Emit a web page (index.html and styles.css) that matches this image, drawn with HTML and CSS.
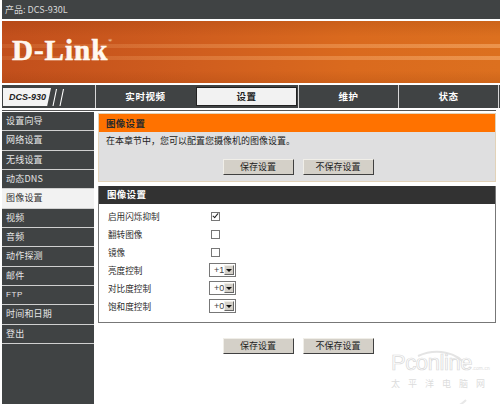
FILE: index.html
```html
<!DOCTYPE html>
<html lang="zh-CN">
<head>
  <meta charset="UTF-8" />
  <title>DCS-930L</title>
  <link rel="stylesheet" href="styles.css">
</head>
<body>
  <div class="product-bar">产品: DCS-930L</div>

  <div class="banner">
    <div class="streak streak-one"></div>
    <div class="streak streak-two"></div>
    <div class="logo">D-Link<sup>®</sup></div>
  </div>

  <nav class="top-nav">
    <div class="brand">
      <span class="brand-name">DCS-930</span>
      <svg class="brand-slashes" width="13" height="19" viewBox="0 0 13 19">
        <path d="M4.5 1 L1 18 M11.5 1 L8 18" stroke="#ffffff" stroke-width="1.1" fill="none" />
      </svg>
    </div>
    <a class="tab">实时视频</a>
    <a class="tab active">设置</a>
    <a class="tab">维护</a>
    <a class="tab">状态</a>
  </nav>
  <div class="nav-rule"></div>

  <div class="main">
    <aside class="sidebar">
      <a class="side-item">设置向导</a>
      <a class="side-item">网络设置</a>
      <a class="side-item">无线设置</a>
      <a class="side-item">动态DNS</a>
      <a class="side-item active">图像设置</a>
      <a class="side-item">视频</a>
      <a class="side-item">音频</a>
      <a class="side-item">动作探测</a>
      <a class="side-item">邮件</a>
      <a class="side-item latin">FTP</a>
      <a class="side-item">时间和日期</a>
      <a class="side-item">登出</a>
      <div class="side-fill"></div>
    </aside>

    <section class="content">
      <div class="intro-box">
        <h2 class="intro-title">图像设置</h2>
        <div class="intro-body">
          <p>在本章节中，您可以配置您摄像机的图像设置。</p>
          <div class="btn-row">
            <button class="btn">保存设置</button>
            <button class="btn">不保存设置</button>
          </div>
        </div>
      </div>

      <div class="settings-box">
        <h3 class="settings-title">图像设置</h3>
        <div class="settings-body">
          <div class="row"><span class="row-label">启用闪烁抑制</span><input class="check" type="checkbox" checked></div>
          <div class="row"><span class="row-label">翻转图像</span><input class="check" type="checkbox"></div>
          <div class="row"><span class="row-label">镜像</span><input class="check" type="checkbox"></div>
          <div class="row"><span class="row-label">亮度控制</span><span class="select"><span class="select-value">+1</span><span class="select-arrow"></span></span></div>
          <div class="row"><span class="row-label">对比度控制</span><span class="select"><span class="select-value">+0</span><span class="select-arrow"></span></span></div>
          <div class="row"><span class="row-label">饱和度控制</span><span class="select"><span class="select-value">+0</span><span class="select-arrow"></span></span></div>
        </div>
      </div>

      <div class="btn-row bottom">
        <button class="btn">保存设置</button>
        <button class="btn">不保存设置</button>
      </div>
    </section>
  </div>

  <div class="watermark">
    <svg class="wm-arcs" width="70" height="64" viewBox="0 0 70 64">
      <path d="M12 6 C30 -2 52 2 60 16" stroke="#e4e4e4" stroke-width="2" fill="none" />
      <path d="M8 56 C24 66 48 62 60 50" stroke="#e8e8e8" stroke-width="2" fill="none" />
    </svg>
    <div class="wm-name">Pconline<small>.com.cn</small></div>
    <div class="wm-sub">太平洋电脑网</div>
  </div>
</body>
</html>
```

FILE: styles.css
```css
:root {
  --dark: #404344;
  --orange: #ff7200;
  --rule: #d0d0d0;
  --cjk: "Noto Sans CJK SC", "Liberation Sans", sans-serif;
}

*, *::before, *::after {
  box-sizing: border-box;
}

html, body {
  height: 100%;
}

body {
  margin: 0;
  width: 500px;
  height: 404px;
  overflow: hidden;
  position: relative;
  background: #ffffff;
  color: #222222;
  font-family: var(--cjk);
  font-size: 9px;
}

.product-bar {
  height: 19px;
  margin-left: 2px;
  padding-left: 3px;
  background: var(--dark);
  color: #d8d8d8;
  font-size: 9px;
  line-height: 19px;
}

.banner {
  position: relative;
  height: 62px;
  margin: 2px 0 2px 2px;
  background:
    linear-gradient(to bottom, rgba(120, 40, 0, 0.16), rgba(120, 40, 0, 0) 25%, rgba(120, 40, 0, 0) 80%, rgba(120, 40, 0, 0.14)),
    linear-gradient(to right, #c24f1c 0%, #d05e1e 40%, #da6a1e 70%, #dc701f 100%);
  overflow: hidden;
}

.streak {
  position: absolute;
  left: 0;
  right: 0;
  height: 4px;
  background: linear-gradient(to right, rgba(255, 190, 130, 0.12), rgba(255, 190, 130, 0.45));
}

.streak-one { top: 23px; }
.streak-two { top: 35px; }

.logo {
  position: absolute;
  left: 10px;
  top: 11px;
  color: #fff8f0;
  font-family: "Liberation Serif", serif;
  font-weight: 700;
  font-size: 29px;
  line-height: 36px;
  letter-spacing: 1px;
  -webkit-text-stroke: 0.6px #fff8f0;
}

.logo sup {
  font-size: 5px;
  vertical-align: 18px;
  line-height: 0;
  -webkit-text-stroke: 0;
}

.top-nav {
  display: flex;
  height: 23px;
  margin-left: 2px;
  background: var(--dark);
}

.brand {
  display: flex;
  align-items: center;
  width: 93px;
  padding: 3px 0 2px 1px;
}

.brand-name {
  width: 48px;
  height: 18px;
  padding-left: 6px;
  background: #f4f4f4;
  color: #222222;
  font-family: "Liberation Sans", sans-serif;
  font-style: italic;
  font-weight: 700;
  font-size: 9px;
  line-height: 18px;
  clip-path: polygon(0 0, 100% 0, 92% 100%, 0 100%);
}

.brand-slashes {
  margin-left: 1px;
}

.tab {
  flex: 1;
  border-left: 1px solid #d8d8d8;
  color: #ffffff;
  font-weight: 700;
  font-size: 9.5px;
  letter-spacing: 0.6px;
  line-height: 23px;
  text-align: center;
}

.tab:last-child {
  border-right: 1px solid #d8d8d8;
  margin-right: 1px;
}

.tab.active {
  margin: 2px 1px;
  border: 1px solid #222222;
  background: #f2f2f2;
  color: #222222;
  line-height: 17px;
}

.nav-rule {
  height: 1px;
  margin: 2px 4px 0 2px;
  background: #555555;
}

.main {
  display: flex;
  margin-top: 1px;
  margin-left: 2px;
  height: 292px;
}

.sidebar {
  display: flex;
  flex-direction: column;
  width: 92px;
  flex-shrink: 0;
}

.side-item {
  height: 19.33px;
  padding-left: 4px;
  border-bottom: 1px solid var(--rule);
  background: var(--dark);
  color: #e6e6e6;
  font-size: 9px;
  letter-spacing: 0.2px;
  line-height: 18px;
}

.side-item.active {
  background: #f2f2f2;
  color: #333333;
}

.side-item.latin {
  font-family: "Liberation Sans", sans-serif;
  font-size: 8px;
  letter-spacing: 0.6px;
}

.side-fill {
  flex: 1;
  background: var(--dark);
}

.content {
  flex: 1;
  min-width: 0;
  padding: 1px 4px 0 4px;
}

.intro-box {
  border: 1px solid #e2d2b8;
  background: #dfdfe0;
}

.intro-title {
  margin: 0;
  height: 18px;
  padding-left: 7px;
  background: var(--orange);
  color: #2a2a2a;
  font-size: 9.5px;
  letter-spacing: 0.3px;
  line-height: 18px;
}

.intro-body {
  height: 49px;
  padding: 0 0 0 7px;
}

.intro-body p {
  margin: 0;
  font-size: 9px;
  line-height: 17px;
  color: #222222;
}

.btn-row {
  display: flex;
  justify-content: center;
  gap: 9px;
  padding-left: 2px;
}

.intro-body .btn-row {
  margin: 10px 0 0 -7px;
}

.btn-row.bottom {
  margin-top: 15px;
}

.btn {
  width: 71px;
  height: 16px;
  padding: 0;
  border: 1px solid;
  border-color: #f0eee8 #404040 #404040 #f0eee8;
  background: #d4d0c8;
  color: #222222;
  font-family: var(--cjk);
  font-size: 9px;
  line-height: 14px;
}

.settings-box {
  margin-top: 4px;
  border: 1px solid #777777;
  border-top: 0;
}

.settings-title {
  margin: 0;
  height: 18px;
  padding-left: 8px;
  background: #323232;
  color: #ffffff;
  font-size: 9.5px;
  letter-spacing: 0.3px;
  line-height: 17px;
}

.settings-body {
  height: 118px;
  padding: 3px 0 0 9px;
}

.row {
  display: flex;
  align-items: center;
  height: 18px;
}

.row-label {
  width: 101px;
  color: #2c2c2c;
  font-size: 8.6px;
}

.check {
  appearance: none;
  width: 9px;
  height: 9px;
  margin: 0 0 0 2px;
  border: 1px solid #777777;
  background: #ffffff;
  position: relative;
}

.check:checked::after {
  content: "";
  position: absolute;
  left: 2px;
  top: -1px;
  width: 3px;
  height: 6px;
  border: solid #222222;
  border-width: 0 1.5px 1.5px 0;
  transform: rotate(40deg);
}

.select {
  display: flex;
  align-items: center;
  width: 27px;
  height: 14px;
  padding: 1px;
  border: 1px solid #777777;
  background: #ffffff;
}

.select-value {
  flex: 1;
  padding-left: 3px;
  font-family: "Liberation Sans", sans-serif;
  font-size: 9px;
  color: #444444;
}

.select-arrow {
  position: relative;
  width: 10px;
  height: 10px;
  background: #d4d0c8;
  border: 1px solid;
  border-color: #f0eee8 #666666 #666666 #f0eee8;
}

.select-arrow::after {
  content: "";
  position: absolute;
  left: 1px;
  top: 3px;
  border: 3px solid transparent;
  border-top-color: #111111;
  border-bottom: 0;
}

.watermark {
  position: absolute;
  left: 391px;
  top: 353px;
  width: 105px;
  color: #ffffff;
  text-align: left;
}

.wm-arcs {
  position: absolute;
  left: 15px;
  top: -3px;
}

.wm-name {
  position: relative;
  font-family: "Liberation Sans", sans-serif;
  font-size: 22px;
  line-height: 20px;
  letter-spacing: -0.4px;
  white-space: nowrap;
  -webkit-text-stroke: 0.7px #d8d8d8;
}

.wm-name small {
  font-size: 5px;
  letter-spacing: 0;
  -webkit-text-stroke: 0.2px #d8d8d8;
}

.wm-sub {
  position: relative;
  color: #dcdcdc;
  font-size: 9px;
  letter-spacing: 8px;
  line-height: 12px;
  white-space: nowrap;
}
```
